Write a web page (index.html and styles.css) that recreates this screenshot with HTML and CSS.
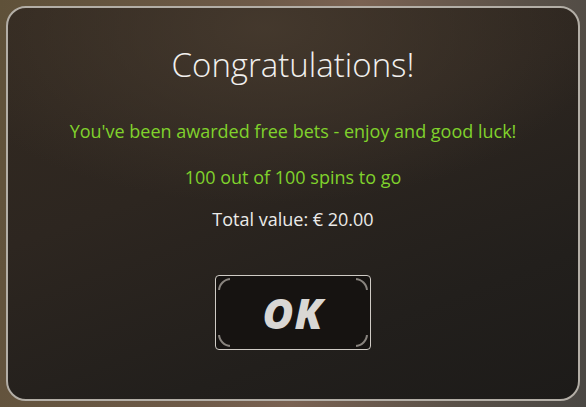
FILE: index.html
```html
<!DOCTYPE html>
<html lang="en">
<head>
    <meta charset="UTF-8">
    <meta name="viewport" content="width=device-width, initial-scale=1.0">
    <title>Free Bets</title>
    <link rel="stylesheet" href="styles.css">
</head>
<body>
    <div class="dialog">
        <h1 class="title">Congratulations!</h1>
        <p class="message">You've been awarded free bets - enjoy and good luck!</p>
        <p class="spins">100 out of 100 spins to go</p>
        <p class="total">Total value: € 20.00</p>
        <button class="ok-btn"><span class="ok-inner"><span class="ok-label">OK</span></span></button>
    </div>
</body>
</html>
```

FILE: styles.css
```css
html, body {
    height: 100%;
}
body {
    margin: 0;
    font-family: "Open Sans", Arial, sans-serif;
    background: linear-gradient(100deg, #5f5139 0%, #6e5a48 40%, #7a6252 55%, #5a5148 80%, #4a4743 100%);
    display: flex;
    padding: 6px;
    box-sizing: border-box;
}
.dialog {
    flex: 1;
    border: 2px solid #b3aea6;
    border-radius: 20px;
    background:
        radial-gradient(ellipse 60% 45% at 45% 5%, rgba(70, 58, 46, 0.9), rgba(70, 58, 46, 0) 100%),
        linear-gradient(160deg, #332a21 0%, #2d2620 40%, #221f1c 75%, #1d1b19 100%);
    display: flex;
    flex-direction: column;
    align-items: center;
    text-align: center;
}
.title {
    margin: 34px 0 0;
    font-size: 33px;
    font-weight: 300;
    color: #f2f0ee;
    line-height: 46px;
}
.message, .spins, .total {
    font-size: 18px;
    line-height: 24px;
    margin: 0;
}
.message, .spins {
    color: #80d22c;
}
.message {
    margin-top: 31px;
}
.spins {
    margin-top: 22px;
}
.total {
    color: #ecebe9;
    margin-top: 18px;
}
.ok-btn {
    margin-top: 44px;
    width: 156px;
    height: 75px;
    border: 1px solid #cfcbc5;
    border-radius: 4px;
    background: #161311;
    padding: 2px;
    box-sizing: border-box;
    cursor: pointer;
}
.ok-inner {
    position: relative;
    display: flex;
    align-items: center;
    justify-content: center;
    height: 100%;
}
/* corner arcs only */
.ok-inner::before {
    content: "";
    position: absolute;
    inset: 0;
    border: 2px solid rgba(175, 170, 163, 0.75);
    border-radius: 13px;
}
.ok-inner::after {
    content: "";
    position: absolute;
    inset: 0;
    background:
        linear-gradient(#161311, #161311) center / calc(100% - 24px) 100% no-repeat,
        linear-gradient(#161311, #161311) center / 100% calc(100% - 24px) no-repeat;
}
.ok-label {
    position: relative;
    z-index: 1;
    font-family: "Open Sans", Arial, sans-serif;
    font-weight: 800;
    font-style: italic;
    font-size: 42px;
    color: #d9d7d4;
    letter-spacing: 1px;
}
```
